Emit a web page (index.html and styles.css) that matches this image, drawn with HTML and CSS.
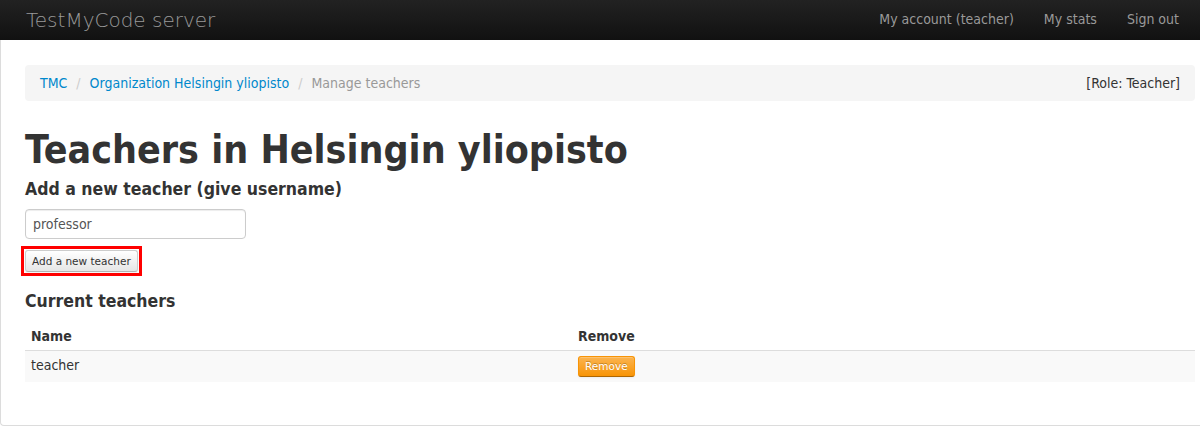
FILE: index.html
```html
<!DOCTYPE html>
<html>
<head>
<meta charset="utf-8">
<title>Teachers in Helsingin yliopisto</title>
<link rel="stylesheet" href="styles.css">
</head>
<body>
<div class="navbar">
  <a class="brand" href="#">TestMyCode server</a>
  <ul class="nav">
    <li><a href="#">My account (teacher)</a></li>
    <li><a href="#">My stats</a></li>
    <li><a href="#">Sign out</a></li>
  </ul>
</div>
<div class="page">
  <div class="breadcrumb">
    <ul class="crumbs">
      <li><a href="#">TMC</a><span class="divider">/</span></li>
      <li><a href="#">Organization Helsingin yliopisto</a><span class="divider">/</span></li>
      <li class="active">Manage teachers</li>
    </ul>
    <span class="role">[Role: Teacher]</span>
  </div>
  <h1>Teachers in Helsingin yliopisto</h1>
  <h4>Add a new teacher (give username)</h4>
  <form class="add-form">
    <input class="text-input" type="text" value="professor">
    <div class="highlight">
      <button type="button" class="btn btn-mini">Add a new teacher</button>
    </div>
  </form>
  <h4 class="current">Current teachers</h4>
  <table class="table">
    <thead>
      <tr><th class="col-name">Name</th><th>Remove</th></tr>
    </thead>
    <tbody>
      <tr><td>teacher</td><td><button type="button" class="btn btn-mini btn-warning">Remove</button></td></tr>
    </tbody>
  </table>
</div>
</body>
</html>
```

FILE: styles.css
```css
html, body {
  margin: 0;
  padding: 0;
  background: #fff;
}
body {
  font-family: "DejaVu Sans Condensed", "DejaVu Sans", "Liberation Sans", sans-serif;
  font-stretch: condensed;
  font-size: 14px;
  line-height: 20px;
  color: #333;
}
a { color: #0088cc; text-decoration: none; }

.navbar {
  height: 40px;
  background: linear-gradient(to bottom, #222222, #111111);
  display: flex;
  align-items: center;
  justify-content: space-between;
  padding: 0 6px 0 7px;
  box-sizing: border-box;
}
.brand {
  font-family: "DejaVu Sans", sans-serif;
  font-stretch: normal;
  color: #999;
  font-size: 20px;
  font-weight: 200;
  line-height: 20px;
  padding: 10px 20px 10px 19px;
}
.nav {
  list-style: none;
  margin: 0;
  padding: 0;
  display: flex;
}
.nav a {
  display: block;
  color: #999;
  padding: 9px 15px 11px 15px;
}

.page {
  box-sizing: border-box;
  min-height: 386px;
  border: 1px solid #dcdcdc;
  border-top: none;
  border-right: none;
  border-radius: 0 0 0 4px;
  padding: 25px 5px 20px 24px;
}

.breadcrumb {
  display: flex;
  justify-content: space-between;
  align-items: center;
  background: #f5f5f5;
  border-radius: 4px;
  padding: 8px 15px;
  margin-bottom: 20px;
}
.crumbs {
  list-style: none;
  margin: 0;
  padding: 0;
  display: flex;
}
.crumbs li { color: #999; }
.divider {
  color: #ccc;
  padding: 0 9px 0 9px;
}
.crumbs li.active { color: #999; }
.role { color: #333; }

h1 {
  font-size: 39px;
  line-height: 40px;
  font-weight: bold;
  margin: 29px 0 5px;
  color: #333;
}
h4 {
  font-size: 17.5px;
  line-height: 20px;
  font-weight: bold;
  margin: 9px 0 10px;
  color: #333;
}

.add-form { margin: 0 0 15px; }
.text-input {
  display: block;
  width: 206px;
  height: 20px;
  padding: 4px 6px 4px 7px;
  font-family: inherit;
  font-stretch: condensed;
  font-size: 14px;
  line-height: 20px;
  color: #555;
  border: 1px solid #ccc;
  border-radius: 4px;
  box-shadow: inset 0 1px 1px rgba(0,0,0,0.075);
  margin: 0 0 7px;
}
.highlight {
  display: inline-block;
  border: 3px solid #ff0000;
  margin-left: -4px;
  padding: 1px;
  line-height: 0;
}

.btn {
  display: inline-block;
  font-family: "DejaVu Sans", sans-serif;
  font-stretch: normal;
  color: #333;
  background: linear-gradient(to bottom, #ffffff, #e6e6e6);
  border: 1px solid #cccccc;
  border-bottom-color: #b3b3b3;
  border-radius: 4px;
  box-shadow: inset 0 1px 0 rgba(255,255,255,0.2), 0 1px 2px rgba(0,0,0,0.05);
  cursor: pointer;
}
.btn-mini {
  font-size: 10.5px;
  line-height: 14px;
  padding: 3px 6px;
  border-radius: 3px;
}
.btn-warning {
  color: #fff;
  background: linear-gradient(to bottom, #fbb450, #f89406);
  border-color: #f89406 #f89406 #ad6704;
  text-shadow: 0 -1px 0 rgba(0,0,0,0.25);
  padding: 2px 6px;
  line-height: 15px;
}

.current { margin: 10px 0 7px; }

.table {
  width: 100%;
  border-collapse: collapse;
  border-spacing: 0;
}
.table th, .table td {
  padding: 8px 6px;
  text-align: left;
  vertical-align: top;
  line-height: 20px;
}
.table th { font-weight: bold; border-bottom: 1px solid #dddddd; padding-bottom: 4px; }
.table tbody tr td { background: #f9f9f9; padding: 4px 6px 5px; }
.col-name { width: 535px; }
```
